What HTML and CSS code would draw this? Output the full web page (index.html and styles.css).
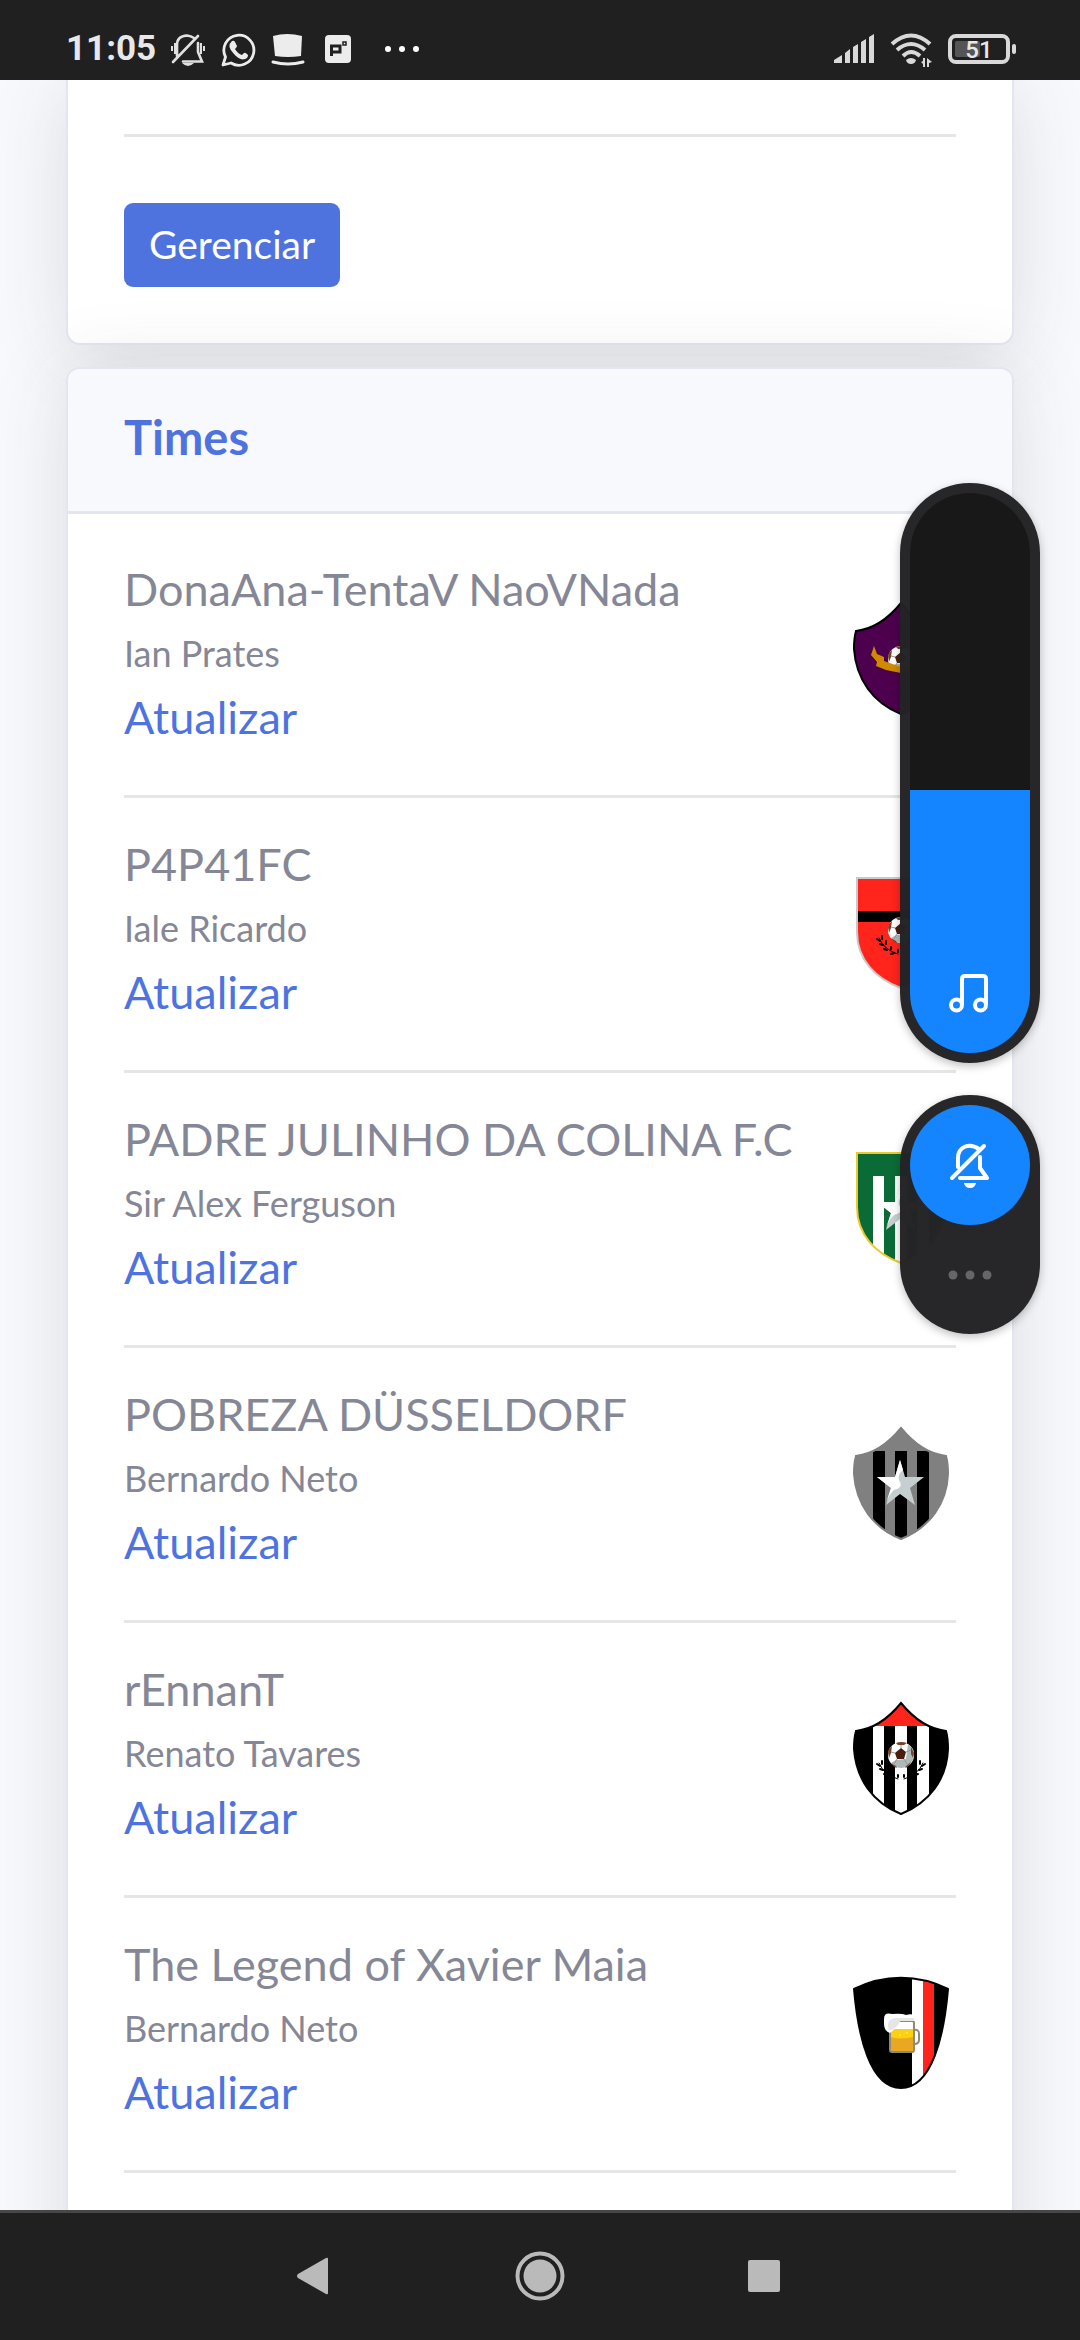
FILE: index.html
```html
<!DOCTYPE html>
<html lang="pt-BR">
<head>
<meta charset="utf-8">
<meta name="viewport" content="width=device-width, initial-scale=1">
<title>Times</title>
<link rel="stylesheet" href="styles.css">
</head>
<body>
<svg class="defs" width="0" height="0" aria-hidden="true">
  <defs>
    <path id="peak" d="M55 4C42 20 27 30 10 32C8 39 8 45 8 50C10 80 27 104 55 115C83 104 101 80 102 50C102 45 102 39 100 32C83 30 68 20 55 4Z"/>
    <path id="flat" d="M11 4H100V58C100 86 80 105 55 114C30 105 11 86 11 58Z"/>
    <path id="dome" d="M8 15C38 0 72 0 102 15C98 62 86 114 55 114C24 114 12 62 8 15Z"/>
    <clipPath id="peak-clip"><use href="#peak"/></clipPath>
    <clipPath id="flat-clip"><use href="#flat"/></clipPath>
    <clipPath id="dome-clip"><use href="#dome"/></clipPath>
    <g id="star">
      <path fill="#c5cfd0" d="M54 36L59 53H78L64 64L69 81L54 70L40 81L45 64L31 53H49Z"/>
      <path fill="#fff" d="M54 36L57 46Q50 52 54 58Q57 64 48 66Q44 69 40 79L45 64L31 53H49Z"/>
    </g>
    <g id="ball">
      <circle cx="55" cy="56" r="13" fill="#fff"/>
      <path fill="#aebaba" d="M62 45Q69 50 68 57Q66 67 56 69Q49 69 45 64L50 61L60 60Z"/>
      <path fill="#4a1d10" d="M55 49L60 53L58 60H51L49 54Z"/>
      <path fill="#7a4424" d="M50 44Q55 42 61 44L58 46H52ZM42 53Q43 49 46 47L45 54L43 59ZM65 48L68 54L67 59L65 55ZM45 64L50 67L51 69Q47 68 45 64ZM60 67L65 63Q63 68 59 69Z"/>
      <path fill="none" stroke="#8f9999" d="M55 49V46M60 53L65 51M58 60L61 65M51 60L48 65M49 54L45 53"/>
    </g>
    <g id="laurel" fill="none" stroke="#000" stroke-width="2" stroke-linecap="round">
      <path stroke-width="1" d="M33 64Q38 76 52 80"/>
      <path d="M31 65L34 67M36 62L36 65M34 70L37 71M40 67L40 70M38 75L41 76M45 73L45 75M45 80L48 79M52 76L52 78"/>
    </g>
  </defs>
</svg>

<header class="status">
  <time class="clock">11:05</time>
  <svg width="36" height="40" viewBox="0 0 36 40" fill="none" stroke="#e0e0e0" stroke-width="2.6">
    <path d="M7 27V16Q7 7 17 6.500Q21 7 24 9M28 14V23L32 32.500H13M3 33L28 7" stroke-linecap="round"/>
    <path stroke-width="2" d="M2 17V22M5 14V25M31 14V25M34 17V22"/><path fill="#e0e0e0" stroke="none" d="M12 34H24Q18 40 12 34Z"/>
  </svg>
  <svg width="36" height="40" viewBox="0 0 36 40">
    <path d="M3 36L5.500 28A15 15 0 1 1 11 34Z" fill="none" stroke="#ececec" stroke-width="2.800" stroke-linejoin="round"/>
    <path fill="#ececec" d="M12 12Q14 11 15 13L17 17Q17 18 15 20Q18 25 22 26L24 24Q25 23 28 26Q28 29 25 30Q20 32 14 25Q6 17 12 12Z"/>
  </svg>
  <svg width="36" height="40" viewBox="0 0 36 40">
    <path fill="#ececec" d="M3 7Q17 3 32 7L31 27Q18 29 5 27Z"/><path d="M3 33Q18 37 33 33" fill="none" stroke="#ececec" stroke-width="3" stroke-linecap="round"/>
  </svg>
  <svg width="36" height="40" viewBox="0 0 36 40">
    <rect x="5" y="6" width="26" height="28" rx="4" fill="#ececec"/>
    <path d="M11.500 27V17H20V23H12" fill="none" stroke="#202020" stroke-width="3"/>
    <path d="M23 13H26V16H23Z" fill="none" stroke="#202020" stroke-width="1.500"/>
  </svg>
  <svg width="64" height="40" viewBox="0 0 64 40" fill="#fff"><circle cx="18" cy="20" r="3"/><circle cx="32" cy="20" r="3"/><circle cx="46" cy="20" r="3"/></svg>
  <span class="spacer"></span>
  <svg width="42" height="40" viewBox="0 0 42 40" fill="#d9d9d9">
    <path d="M1 34V31L9 26V34ZM12 34V24L17 20V34ZM20 34V18L25 15V34ZM28 34V13L33 10V34ZM36 34V8L41 5V34Z"/>
  </svg>
  <svg width="44" height="40" viewBox="0 0 44 40">
    <path d="M3 15Q22 -2 41 15M8 21Q22 9 36 21M14 27Q22 19 31 27" fill="none" stroke="#d9d9d9" stroke-width="4"/>
    <path fill="#d9d9d9" d="M17 31Q22 27 27 31Q26 35 22 35Q18 35 17 31ZM34 29H36V38H34V35L32 33L34 32ZM38 29L43 33L40 34V38H38Z"/>
  </svg>
  <svg width="70" height="40" viewBox="0 0 70 40">
    <rect x="3" y="7" width="58" height="26" rx="6" fill="none" stroke="#d9d9d9" stroke-width="4"/>
    <rect x="8" y="12" width="25" height="16" rx="2" fill="#555"/>
    <rect x="65" y="15" width="4" height="10" rx="2" fill="#d9d9d9"/>
    <text class="charge" x="32" y="29" text-anchor="middle">51</text>
  </svg>
</header>

<main class="page">
  <section class="card card-manage">
    <hr class="rule">
    <button class="btn" type="button">Gerenciar</button>
  </section>

  <section class="card">
    <h1 class="card-title">Times</h1>
    <ul class="teams">
      <li class="team">
        <div class="team-info">
          <h2 class="team-name">DonaAna-TentaV NaoVNada</h2>
          <p class="team-owner">Ian Prates</p>
          <a class="team-link" href="#">Atualizar</a>
        </div>
        <svg class="crest" viewBox="0 0 110 120">
          <use href="#peak" fill="#4d004d" stroke="#000" stroke-width="2"/>
          <use href="#ball" y="4"/>
          <path fill="#d08a00" d="M25 56L28 47L31 55L38 58V62L55 68L72 62V58L79 55L82 47L85 56L80 67L70 69L55 74L40 71L30 67L31 63Z"/>
        </svg>
      </li>
      <li class="team">
        <div class="team-info">
          <h2 class="team-name">P4P41FC</h2>
          <p class="team-owner">Iale Ricardo</p>
          <a class="team-link" href="#">Atualizar</a>
        </div>
        <svg class="crest" viewBox="0 0 110 120">
          <use href="#flat" fill="#ff241c"/>
          <path d="M11 37H100V48H11Z"/>
          <use href="#flat" fill="none" stroke="#c9c9c9" stroke-width="2"/>
          <use href="#laurel"/><use href="#ball"/>
        </svg>
      </li>
      <li class="team">
        <div class="team-info">
          <h2 class="team-name">PADRE JULINHO DA COLINA F.C</h2>
          <p class="team-owner">Sir Alex Ferguson</p>
          <a class="team-link" href="#">Atualizar</a>
        </div>
        <svg class="crest" viewBox="0 0 110 120">
          <use href="#flat" fill="#0b6b37"/>
          <path clip-path="url(#flat-clip)" fill="#fff" d="M27 27H38V120H27ZM49 27H61V120H49ZM71 27H83V120H71Z"/>
          <use href="#flat" fill="none" stroke="#ecc92a" stroke-width="2"/>
          <use href="#star"/>
        </svg>
      </li>
      <li class="team">
        <div class="team-info">
          <h2 class="team-name">POBREZA DÜSSELDORF</h2>
          <p class="team-owner">Bernardo Neto</p>
          <a class="team-link" href="#">Atualizar</a>
        </div>
        <svg class="crest" viewBox="0 0 110 120">
          <use href="#peak" fill="#808080"/>
          <path clip-path="url(#peak-clip)" d="M27 27H39V120H27ZM49 27H61V120H49ZM71 27H83V120H71Z"/>
          <use href="#peak" fill="none" stroke="#808080" stroke-width="2"/>
          <use href="#star"/>
        </svg>
      </li>
      <li class="team">
        <div class="team-info">
          <h2 class="team-name">rEnnanT</h2>
          <p class="team-owner">Renato Tavares</p>
          <a class="team-link" href="#">Atualizar</a>
        </div>
        <svg class="crest" viewBox="0 0 110 120">
          <use href="#peak"/>
          <g clip-path="url(#peak-clip)">
            <path fill="#ff241c" d="M20 0H90V27H20Z"/>
            <path fill="#fff" d="M27 27H38V120H27ZM49 27H61V120H49ZM71 27H83V120H71Z"/>
          </g>
          <use href="#peak" fill="none" stroke="#000" stroke-width="2"/>
          <use href="#laurel"/><use href="#laurel" transform="matrix(-1 0 0 1 110 0)"/><use href="#ball"/>
        </svg>
      </li>
      <li class="team">
        <div class="team-info">
          <h2 class="team-name">The Legend of Xavier Maia</h2>
          <p class="team-owner">Bernardo Neto</p>
          <a class="team-link" href="#">Atualizar</a>
        </div>
        <svg class="crest" viewBox="0 0 110 120">
          <use href="#dome"/>
          <g clip-path="url(#dome-clip)"><path fill="#fff" d="M66 0H77V120H66Z"/><path fill="#ff241c" d="M77 0H88V120H77Z"/></g>
          <use href="#dome" fill="none" stroke="#000" stroke-width="2"/>
          <path fill="none" stroke="#8d8b72" stroke-width="2" d="M68 56Q73 55 73 60V66Q73 70 68 70"/>
          <rect x="44" y="47" width="24" height="31" rx="2" fill="#fff" stroke="#8d8b72" stroke-width="2"/>
          <path fill="#ffcf12" d="M45 55H67V66H45Z"/><path fill="#e9a723" d="M45 63Q54 66 67 63V77H45Z"/>
          <path fill="#fff" d="M44 59Q38 57 38 50V45Q38 38 46 40Q56 39 60 41Q69 38 69 46H54Q52 53 44 59Z"/>
          <path fill="#e6e6e6" d="M43 57Q39 45 50 44H68V47H54Q52 54 43 57Z"/>
          <g fill="#ffeb83"><circle cx="54" cy="61" r="1"/><circle cx="61" cy="59" r="1"/></g>
        </svg>
      </li>
    </ul>
  </section>
</main>

<aside class="volume">
  <div class="volume-panel">
    <input class="volume-slider" type="range" min="0" max="100" value="47" aria-label="Volume de mídia">
    <svg class="volume-note" viewBox="0 0 40 40" fill="none" stroke="#fff" stroke-width="4">
      <circle cx="7.500" cy="31" r="5.500"/><circle cx="31.500" cy="31" r="5.500"/><path d="M13 31V5Q13 2 16 2H34Q37 2 37 5V31"/>
    </svg>
  </div>
  <div class="volume-panel volume-extra">
    <button class="mute" type="button" aria-label="Silencioso">
      <svg width="44" height="48" viewBox="0 0 44 48" fill="none" stroke="#fff" stroke-width="4" stroke-linecap="round" stroke-linejoin="round">
        <path d="M10 26V17C10 6 21 1 31 8M32 16V27L39 37H12M4 37L36 5"/><path fill="#fff" stroke="none" d="M16 42H28Q27 47 22 47Q17 47 16 42Z"/>
      </svg>
    </button>
    <button class="more" type="button" aria-label="Mais opções">
      <svg width="44" height="10" viewBox="0 0 44 10" fill="#666"><circle cx="5" cy="5" r="4.500"/><circle cx="22" cy="5" r="4.500"/><circle cx="39" cy="5" r="4.500"/></svg>
    </button>
  </div>
</aside>

<nav class="navbar" aria-label="Sistema">
  <button type="button" aria-label="Voltar"><svg width="52" height="52" viewBox="0 0 52 52"><path fill="#bababa" d="M9 24L37 8Q39 7 39 9V43Q39 45 37 44L9 28Q7 26 9 24Z"/></svg></button>
  <button type="button" aria-label="Início"><svg width="52" height="52" viewBox="0 0 52 52"><circle cx="26" cy="26" r="22.500" fill="none" stroke="#bababa" stroke-width="4"/><circle cx="26" cy="26" r="16.500" fill="#bababa"/></svg></button>
  <button type="button" aria-label="Recentes"><svg width="52" height="52" viewBox="0 0 52 52"><rect x="9" y="10" width="32" height="32" rx="2" fill="#bababa"/></svg></button>
</nav>
</body>
</html>
```

FILE: styles.css
```css
* {
  box-sizing: border-box;
}

body {
  margin: 0;
  height: 100vh;
  display: flex;
  flex-direction: column;
  overflow: hidden;
  background: #f8f9fc;
  color: #858796;
  font: 400 45px/64px Lato, "Noto Sans", sans-serif;
}

button {
  border: 0;
  padding: 0;
  background: none;
  font: inherit;
}

svg {
  display: block;
  flex: none;
}

.defs {
  position: absolute;
}

/* System status bar */
.status {
  display: flex;
  flex: none;
  align-items: center;
  gap: 14px;
  height: 80px;
  padding: 18px 63px 0 66px;
  background: #202020;
  position: relative;
  z-index: 1;
}

.clock {
  min-width: 90px;
  color: #e8e8e8;
  font: 700 35px/40px Roboto, sans-serif;
}

.spacer {
  flex: 1;
  margin-right: -14px;
}

.charge {
  fill: #e8e8e8;
  font: 500 24px Roboto, sans-serif;
}

/* Scrolled page */
.page {
  flex: 1;
  min-height: 0;
  overflow: hidden;
  padding: 0 66px;
}

.card {
  background: #fff;
  border: 2px solid #e3e6f0;
  border-radius: 14px;
  box-shadow: 0 7px 77px rgba(58, 59, 69, 0.15);
}

.card-manage {
  border-top: 0;
  border-radius: 0 0 14px 14px;
  margin-bottom: 22px;
  padding: 54px 56px 56px;
}

.rule {
  height: 3px;
  margin: 0 0 66px;
  border: 0;
  background: #e6e6e6;
}

.btn {
  display: block;
  height: 84px;
  padding: 0 25px 2px;
  border-radius: 9px;
  background: #4e73df;
  color: #fff;
  font-size: 39px;
}

.card-title {
  margin: 0;
  padding: 36px 56px 42px;
  border-bottom: 3px solid #e3e6f0;
  border-radius: 12px 12px 0 0;
  background: #f8f9fc;
  color: #4e73df;
  font: inherit;
  font-size: 47px;
  font-weight: 700;
}

.teams {
  margin: 0;
  padding: 9px 56px 180px;
  list-style: none;
}

.team {
  display: flex;
  align-items: center;
  justify-content: space-between;
  padding: 34px 0 46px;
  border-bottom: 3px solid #e6e6e6;
}

.team-info {
  display: flex;
  flex-direction: column;
  align-items: flex-start;
}

.team-name,
.team-owner {
  margin: 0;
  font: inherit;
}

.team-owner {
  font-size: 36px;
}

.team-link {
  color: #4e73df;
  text-decoration: none;
}

.crest {
  width: 110px;
  height: 120px;
  margin-top: 12px;
}

/* Volume overlay */
.volume {
  position: absolute;
  top: 483px;
  right: 40px;
  display: flex;
  flex-direction: column;
  gap: 32px;
}

.volume-panel {
  position: relative;
  width: 140px;
  padding: 10px;
  border-radius: 70px;
  background: rgba(35, 35, 37, 0.98);
  box-shadow: 0 3px 8px rgba(0, 0, 0, 0.25);
}

.volume-slider {
  display: block;
  appearance: none;
  writing-mode: vertical-lr;
  direction: rtl;
  width: 120px;
  height: 560px;
  margin: 0;
  border-radius: 60px;
  background: linear-gradient(to top, #1485ff 47%, #181818 47%);
}

.volume-slider::-webkit-slider-thumb {
  appearance: none;
  width: 120px;
  height: 4px;
  background: transparent;
}

.volume-note {
  position: absolute;
  left: 49px;
  bottom: 49px;
  width: 40px;
  height: 40px;
  pointer-events: none;
}

.volume-extra {
  display: flex;
  flex-direction: column;
}

.mute {
  display: grid;
  place-items: center;
  height: 120px;
  border-radius: 60px;
  background: #1485ff;
}

.more {
  display: grid;
  place-items: center;
  height: 99px;
}

/* System navigation */
.navbar {
  display: flex;
  flex: none;
  justify-content: center;
  gap: 173px;
  padding: 37px 0 38px;
  border-top: 3px solid #474747;
  background: #202020;
  position: relative;
}
```
